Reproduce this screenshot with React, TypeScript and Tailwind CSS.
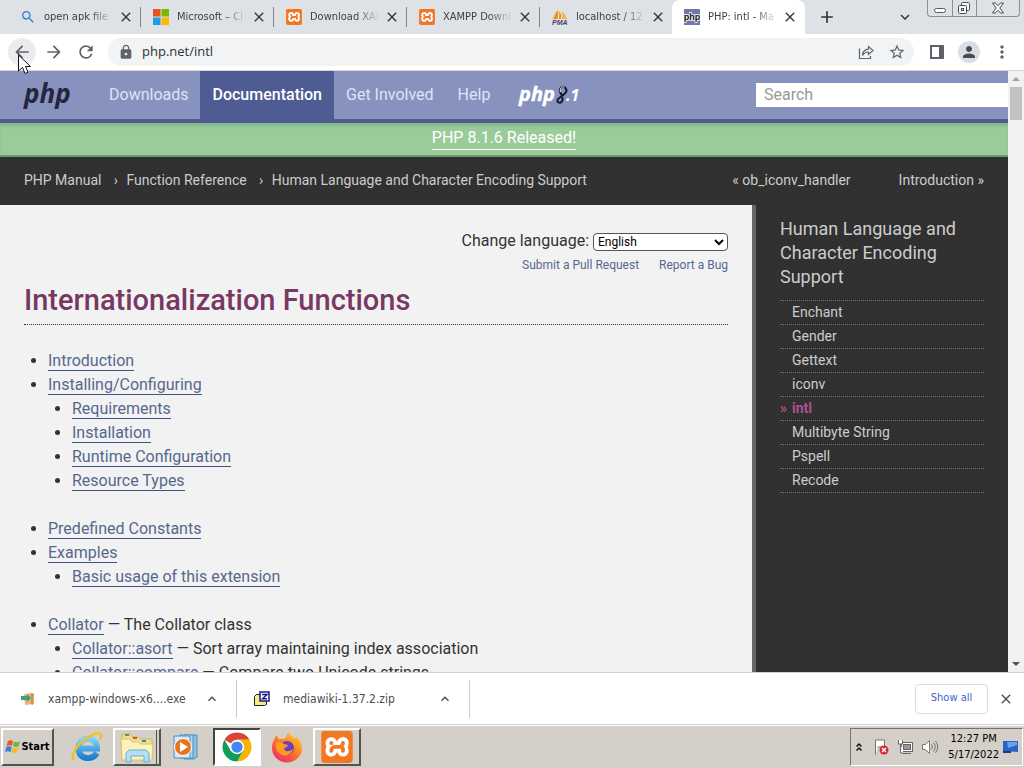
import type { ReactNode } from "react";
import {
  MdArrowBack,
  MdArrowForward,
  MdClose,
  MdExpandLess,
  MdExpandMore,
  MdAdd,
  MdLock,
  MdMoreVert,
  MdPerson,
  MdRefresh,
  MdSearch,
  MdStarBorder,
} from "react-icons/md";
import { SiXampp } from "react-icons/si";

const uiFont = "font-['DejaVu_Sans_Condensed','Noto_Sans',sans-serif]";
const darkTexture =
  "bg-[conic-gradient(#343434_25%,#2d2d2d_0_50%,#343434_0_75%,#2d2d2d_0)] bg-[length:4px_4px]";

function MicrosoftIcon() {
  return (
    <svg viewBox="0 0 16 16" className="size-4">
      <path fill="#e8521f" d="M0 0h7.5v7.5H0z" />
      <path fill="#7db700" d="M8.5 0H16v7.5H8.5z" />
      <path fill="#1a9fe8" d="M0 8.5h7.5V16H0z" />
      <path fill="#fdb800" d="M8.5 8.5H16V16H8.5z" />
    </svg>
  );
}

function XamppIcon({ className }: { className: string }) {
  return (
    <span className={`block rounded-sm bg-white text-[#f37623] ${className}`}>
      <SiXampp className="size-full" />
    </span>
  );
}

function PhpMyAdminIcon() {
  return (
    <svg viewBox="0 0 16 16" className="size-4">
      <path fill="#f29111" d="M5.500 1C3.500 4 2.500 7 1 10h4.500c.8-3 .8-6 0-9z" />
      <path fill="#f9b04a" d="M9.500 2c1 2.500 1 5.500.300 8H15c-.8-3-2.500-6-5.500-8z" />
      <path fill="#f29111" d="M6.500 1.500c1 3 1 5.500.3 8.500h2c.8-3 .4-6-2.300-8.500z" />
      <text x="0" y="16" fontSize="7" fontWeight="700" fontStyle="italic" fill="#454466" fontFamily="Liberation Sans, sans-serif">
        PMA
      </text>
    </svg>
  );
}

function PhpFavicon() {
  return (
    <svg viewBox="0 0 16 16" className="size-4">
      <path fill="#7277ab" d="M0 0h16v16H0z" />
      <text x="8" y="11" fontSize="9" fontWeight="700" textAnchor="middle" fill="#111" stroke="#fff" strokeWidth="1.500" paintOrder="stroke" fontFamily="Liberation Sans, sans-serif">
        php
      </text>
    </svg>
  );
}

const tabs: { title: string; icon: ReactNode; active?: boolean }[] = [
  { title: "open apk file", icon: <MdSearch className="size-4 text-[#2f7fd0]" /> },
  { title: "Microsoft – Cl", icon: <MicrosoftIcon /> },
  { title: "Download XAI", icon: <XamppIcon className="size-4" /> },
  { title: "XAMPP Downl", icon: <XamppIcon className="size-4" /> },
  { title: "localhost / 12", icon: <PhpMyAdminIcon /> },
  { title: "PHP: intl - Ma", icon: <PhpFavicon />, active: true },
];

function TabStrip() {
  return (
    <div className={`relative flex h-[34px] shrink-0 items-center bg-[#dee1e6] pl-2 text-[#3c4043] ${uiFont}`}>
      {tabs.map((tab, i) => (
        <div
          key={tab.title}
          className={`flex h-full w-[133px] items-center pr-[7px] pl-3 ${tab.active ? "-ml-px rounded-t-lg bg-white" : ""}`}
        >
          {tab.icon}
          <span className="ml-2 min-w-0 flex-1 text-[11px] whitespace-nowrap [mask-image:linear-gradient(to_right,#000_65%,transparent_100%)]">
            {tab.title}
          </span>
          <button aria-label={`Close ${tab.title}`} className="ml-1">
            <MdClose className="size-4 text-[#333]" />
          </button>
          {i < 4 && <span className="-mr-[7px] ml-[6px] h-5 w-px bg-[#80868b]" />}
        </div>
      ))}
      <button aria-label="New tab" className="ml-3">
        <MdAdd className="size-5 text-[#333]" />
      </button>
      <button aria-label="Search tabs" className="mr-[110px] ml-auto">
        <MdExpandMore className="size-[18px] text-[#333]" />
      </button>
      <div className="absolute top-0 right-1 flex h-[17px] w-[93px] overflow-hidden rounded-b border border-t-0 border-[#8b8f96] text-[#4a4d52]">
        <button aria-label="Minimize" className="flex flex-1 items-center justify-center border-r border-[#8b8f96]">
          <span className="mt-1 h-[5px] w-3 rounded-sm border border-[#55585d] bg-white" />
        </button>
        <button aria-label="Restore" className="flex flex-1 items-center justify-center border-r border-[#8b8f96]">
          <svg viewBox="0 0 14 14" className="size-[14px]" fill="#f4f5f7" stroke="#4a4d52">
            <rect x="4.500" y="1.500" width="8" height="8" rx="1" />
            <rect x="1.500" y="4.500" width="8" height="8" rx="1" />
            <rect x="4.500" y="7.500" width="2" height="2" />
          </svg>
        </button>
        <button aria-label="Close" className="flex w-[42px] items-center justify-center">
          <svg viewBox="0 0 14 12" className="h-3 w-[14px]" fill="#f4f5f7" stroke="#4a4d52">
            <path d="M1.500 1h3L7 3.700 9.500 1h3L8.800 6l3.700 5h-3L7 8.300 4.500 11h-3l3.700-5z" />
          </svg>
        </button>
      </div>
    </div>
  );
}

function Toolbar() {
  return (
    <div className="relative flex h-[37px] shrink-0 items-center border-b border-[#d5d7db] bg-white pr-3 pl-2 text-[#5f6368]">
      <button aria-label="Back" className="flex size-7 items-center justify-center rounded-full bg-[#ececee]">
        <MdArrowBack className="size-5" />
      </button>
      <button aria-label="Forward" className="ml-1 flex size-7 items-center justify-center">
        <MdArrowForward className="size-5" />
      </button>
      <button aria-label="Reload" className="ml-1 flex size-7 items-center justify-center">
        <MdRefresh className="size-5" />
      </button>
      <div className="ml-2 flex h-7 min-w-0 flex-1 items-center rounded-full bg-[#f1f3f4] pr-2 pl-[10px]">
        <MdLock className="size-4" />
        <input
          aria-label="Address"
          defaultValue="php.net/intl"
          className="ml-2 min-w-0 flex-1 bg-transparent font-['Open_Sans',sans-serif] text-[13px] text-[#303134] outline-none"
        />
        <button aria-label="Share">
          <svg viewBox="0 0 16 16" className="size-4" fill="none" stroke="currentColor" strokeWidth="1.200">
            <path d="M1.500 4.500v10h11V12" />
            <path d="M4.500 11.500c.300-4 2.500-6 6-6.300V2.500l4.500 4-4.500 4V8c-2.500 0-4.500 1-6 3.500z" />
          </svg>
        </button>
        <button aria-label="Bookmark" className="ml-[14px]">
          <MdStarBorder className="size-[18px]" />
        </button>
      </div>
      <button aria-label="Side panel" className="ml-4">
        <svg viewBox="0 0 14 14" className="size-[14px]">
          <path fill="currentColor" fillRule="evenodd" d="M0 0h14v14H0zM2 2v10h7V2z" />
        </svg>
      </button>
      <button aria-label="Profile" className="ml-[14px] flex size-[22px] items-center justify-center rounded-full bg-[#d9dde5]">
        <MdPerson className="size-[18px] text-[#454b57]" />
      </button>
      <button aria-label="Menu" className="ml-3">
        <MdMoreVert className="size-5" />
      </button>
      <svg viewBox="0 0 14 22" className="absolute top-[20px] left-[18px] z-10 h-[22px] w-[14px]">
        <path fill="#fff" stroke="#111" d="M.500 1v16l4-3.500 2.500 6 3-1.300-2.500-5.700H12.500z" />
      </svg>
    </div>
  );
}

const navLinks = ["Downloads", "Documentation", "Get Involved", "Help"];

function SiteHeader() {
  return (
    <header className="flex h-[52px] shrink-0 items-stretch border-b-4 border-[#4f5b93] bg-[#8892bf]">
      <a href="#home" className="mr-[26px] ml-6 flex w-[47px] items-center pb-1 font-['Open_Sans',sans-serif] text-[26px] leading-none font-bold text-[#23263c] italic">
        php
      </a>
      <nav className="flex">
        {navLinks.map((link) => (
          <a
            key={link}
            href="#nav"
            className={`flex items-center px-3 ${
              link === "Documentation" ? "bg-[#4f5b93] font-medium text-white" : "text-[#dfe3f6]"
            }`}
          >
            {link}
          </a>
        ))}
      </nav>
      <a href="#release" aria-label="php8.1" className="ml-4 flex items-center">
        <svg viewBox="0 0 64 26" className="h-[26px] w-16" fontFamily="Open Sans, sans-serif" fontSize="20" fontWeight="700" fontStyle="italic">
          <text x="1" y="19" fill="#fff" stroke="#fff" strokeWidth="0.400">
            php
          </text>
          <path d="M46.500 5c-3-1-6 2-4 6 1 2 3 4 2 7-1 4-6 3-5 0s8-5 9-9c0-1-1-3-2-4z" fill="none" stroke="#151a2c" strokeWidth="2" />
          <path d="M46.500 5c-3-1-5 2-4 5" fill="none" stroke="#fff" strokeWidth="1" />
          <text x="48" y="19" fontSize="16" fill="#fff">
            .1
          </text>
        </svg>
      </a>
      <input
        type="search"
        aria-label="Search"
        placeholder="Search"
        className="my-3 ml-auto h-6 w-1/4 bg-white px-2 placeholder:text-[#999]"
      />
    </header>
  );
}

function Breadcrumbs() {
  return (
    <nav className={`flex h-12 shrink-0 items-center px-6 pb-px text-[14px] text-[#ccc] ${darkTexture}`}>
      <a href="#manual">PHP Manual</a>
      <span className="w-[25px] pl-1 text-center">›</span>
      <a href="#funcref">Function Reference</a>
      <span className="w-[25px] pl-1 text-center">›</span>
      <a href="#international">Human Language and Character Encoding Support</a>
      <a href="#prev" className="ml-auto">
        « ob_iconv_handler
      </a>
      <a href="#next" className="ml-12">
        Introduction »
      </a>
    </nav>
  );
}

type Entry = { name: string; note?: string; children?: Entry[] };

const toc: Entry[] = [
  { name: "Introduction" },
  {
    name: "Installing/Configuring",
    children: [
      { name: "Requirements" },
      { name: "Installation" },
      { name: "Runtime Configuration" },
      { name: "Resource Types" },
    ],
  },
  { name: "Predefined Constants" },
  { name: "Examples", children: [{ name: "Basic usage of this extension" }] },
  {
    name: "Collator",
    note: "The Collator class",
    children: [
      { name: "Collator::asort", note: "Sort array maintaining index association" },
      { name: "Collator::compare", note: "Compare two Unicode strings" },
    ],
  },
];

function EntryList({ entries, nested }: { entries: Entry[]; nested?: boolean }) {
  return (
    <ul className={`list-disc pl-6 ${nested ? "mb-6" : ""}`}>
      {entries.map((entry) => (
        <li key={entry.name} className="leading-6">
          <a href="#entry" className="border-b border-[#3f5580] text-[#56688f]">
            {entry.name}
          </a>
          {entry.note && ` — ${entry.note}`}
          {entry.children && <EntryList entries={entry.children} nested />}
        </li>
      ))}
    </ul>
  );
}

function ManualPage() {
  return (
    <main className="min-w-0 flex-1 border-r-4 border-[#666] bg-[#f2f2f2] px-6 pt-6 text-[#333]">
      <div className="flex items-center justify-end gap-1">
        <label htmlFor="language">Change language:</label>
        <select
          id="language"
          className="mt-px h-[18px] w-[135px] rounded-sm border border-[#555] bg-white text-[12px] leading-none text-black"
        >
          <option>English</option>
        </select>
      </div>
      <div className="flex justify-end gap-5 text-[12px] leading-6 text-[#56688f]">
        <a href="#edit">Submit a Pull Request</a>
        <a href="#bug">Report a Bug</a>
      </div>
      <h1 className="mb-6 border-b border-dotted border-[#333] text-[29px] leading-[47px] font-medium text-[#793862]">
        Internationalization Functions
      </h1>
      <EntryList entries={toc} />
    </main>
  );
}

const siblings = ["Enchant", "Gender", "Gettext", "iconv", "intl", "Multibyte String", "Pspell", "Recode"];

function Sidebar() {
  return (
    <aside className={`w-[252px] shrink-0 px-6 pt-3 text-[#ccc] ${darkTexture}`}>
      <h2 className="mb-[11px] text-[18px] leading-6">Human Language and Character Encoding Support</h2>
      <ul className="border-t border-dotted border-[#777] text-[14px]">
        {siblings.map((name) => (
          <li key={name} className="h-6 border-b border-dotted border-[#777] leading-[23px]">
            {name === "intl" ? (
              <a href="#intl" className="font-bold text-[#ae508d]">
                <span className="inline-block w-3">»</span>
                {name}
              </a>
            ) : (
              <a href="#sibling" className="pl-3">
                {name}
              </a>
            )}
          </li>
        ))}
      </ul>
    </aside>
  );
}

function Scrollbar() {
  return (
    <div className="flex w-4 shrink-0 flex-col items-center bg-[#f1f1f1] py-[6px]">
      <span className="border-x-4 border-b-4 border-x-transparent border-b-[#a3a3a3]" />
      <span className="mt-[6px] h-[33px] w-3 bg-[#c1c1c1]" />
      <span className="mt-auto border-x-4 border-t-4 border-x-transparent border-t-[#505050]" />
    </div>
  );
}

function InstallerIcon() {
  return (
    <svg viewBox="0 0 16 16" className="size-4">
      <path fill="#e6b873" d="M4 3l9-1 1 11-9 1z" />
      <path fill="#c99548" d="M11 2l3 1-1 11-2-1z" />
      <path fill="#3f9e7c" d="M1 5h6V3l4 4-4 4V9H1z" />
    </svg>
  );
}

function ZipIcon() {
  return (
    <svg viewBox="0 0 18 16" className="h-4 w-[18px]">
      <path fill="#f3ef7c" stroke="#222" d="M1.500 5.500l2-2h10v10l-2 1h-10z" />
      <rect x="7" y="1" width="9" height="9" fill="#fff" stroke="#1a1a8c" strokeWidth="1.500" />
      <path fill="none" stroke="#1a1a8c" strokeWidth="1.500" d="M9 3.500h5L9.500 7.800H14" />
    </svg>
  );
}

function DownloadsBar() {
  return (
    <div className={`flex h-[53px] shrink-0 items-center border-y border-[#d0d0d0] bg-white text-[12px] text-[#4a4d51] ${uiFont}`}>
      <div className="flex h-[38px] w-[237px] items-center border-r border-[#ccc] pr-4 pl-5">
        <InstallerIcon />
        <span className="ml-3">xampp-windows-x6....exe</span>
        <button aria-label="Installer options" className="ml-auto">
          <MdExpandLess className="size-4" />
        </button>
      </div>
      <div className="flex h-[38px] w-[233px] items-center border-r border-[#ccc] pr-4 pl-4">
        <ZipIcon />
        <span className="ml-3">mediawiki-1.37.2.zip</span>
        <button aria-label="Archive options" className="ml-auto">
          <MdExpandLess className="size-4" />
        </button>
      </div>
      <button className="ml-auto h-[30px] w-[73px] rounded border border-[#dadce0] text-[11px] text-[#3f5fc8]">Show all</button>
      <button aria-label="Close downloads" className="mr-[10px] ml-[10px]">
        <MdClose className="size-4" />
      </button>
    </div>
  );
}

function WindowsFlag() {
  return (
    <svg viewBox="0 0 16 16" className="size-4">
      <path fill="#e8582c" d="M3 2c2-1 3-1 5 0L7 7C5 6 4 6 1.500 7z" />
      <path fill="#6fb544" d="M9 2.500c2 1 4 1 6 0L13.800 7.300c-2 1-4 1-5.800 0z" />
      <path fill="#3c7fd4" d="M1.300 8c2-1 3.500-1 5.500 0L5.600 13c-2-1-3.600-1-5.600 0z" />
      <path fill="#f6bd27" d="M7.800 8.500c2 1 4 1 5.800 0L12.300 13.300c-2 1-3.800 1-5.800 0z" />
    </svg>
  );
}

function ExplorerEIcon() {
  return (
    <svg viewBox="0 0 32 32" className="size-8">
      <defs>
        <linearGradient id="ie" x1="0" y1="0" x2="0" y2="1">
          <stop offset="0" stopColor="#7fd4f7" />
          <stop offset="1" stopColor="#1d7fd0" />
        </linearGradient>
      </defs>
      <path fill="none" stroke="url(#ie)" strokeWidth="6" d="M8 17.500h18c0-6-3-10-9-10S7.500 12 7.500 17.500 11 27 17 27c4 0 7-2 9-5" />
      <path fill="none" stroke="#eec22e" strokeWidth="2.500" d="M3 29c-4-4 2-14 10-20S29 0 30 4c.5 1.500 0 3-1 5" />
    </svg>
  );
}

function FolderIcon() {
  return (
    <svg viewBox="0 0 34 32" className="h-8 w-[34px]">
      <path fill="#f0df90" stroke="#cdb45f" d="M2 3h8l2 3h7l2 2h11v20H2z" />
      <path fill="#fbf3b8" stroke="#d8c272" d="M1 8h9l2 3h7l2 2h12l-1 16H2z" />
      <path fill="#4c9a45" d="M5 3h4v2H5z" />
      <path fill="#d1542f" d="M13 6h4v2h-4z" />
      <path fill="#3b83c8" d="M22 9h4v2h-4z" />
      <path fill="#b4def2" stroke="#63aedb" d="M6 31v-9l3-3h17l3 3v9h-5v-6H11v6z" />
    </svg>
  );
}

function MediaPlayerIcon() {
  return (
    <svg viewBox="0 0 30 28" className="h-7 w-[30px]">
      <path fill="#8fc1e3" stroke="#4d8fc0" d="M12 2h13v22l-3 2H12z" />
      <path fill="#b7daf0" stroke="#4d8fc0" d="M8 2h13v23H8z" />
      <path fill="#d4e9f6" stroke="#4d8fc0" d="M2 3h16v22H2z" />
      <circle cx="11" cy="14" r="8.500" fill="#e8731d" stroke="#fff" />
      <path fill="#fff" d="M8 9l8 5-8 5z" />
    </svg>
  );
}

function ChromeIcon() {
  return (
    <svg viewBox="0 0 48 48" className="size-[30px]">
      <path fill="#db4437" d="M24 24L4 12.500A23 23 0 0 1 44 12.500H24z" />
      <path fill="#f4b400" d="M24 12.500h20A23 23 0 0 1 24 47l10-17z" />
      <path fill="#0f9d58" d="M4 12.500A23 23 0 0 0 24 47l10-17-10 4-10-4z" />
      <circle cx="24" cy="24" r="11.500" fill="#fff" />
      <circle cx="24" cy="24" r="9" fill="#4285f4" />
    </svg>
  );
}

function FirefoxIcon() {
  return (
    <svg viewBox="0 0 32 32" className="size-8">
      <defs>
        <linearGradient id="fx" x1="1" y1="0" x2="0.300" y2="1">
          <stop offset="0" stopColor="#ffdf3a" />
          <stop offset="0.500" stopColor="#ff8420" />
          <stop offset="1" stopColor="#ee2f64" />
        </linearGradient>
      </defs>
      <path fill="url(#fx)" d="M18 1c1 4 4 4 6 7l1-3c4 4 6 8 6 12a15 14.500 0 0 1-30 0c0-4 1-7 3-10l1-3 3 4h4l3-1c0-2 1-4 3-6z" />
      <circle cx="16" cy="17" r="7" fill="#6d3fc0" />
      <path fill="#ff9a22" d="M5 12c3-2 6-1 8 1l4 1c0 2-3 2-4 4 1 3 6 3 9 0-1 5-6 7-10 6-5-1-8-6-7-12z" />
    </svg>
  );
}

const taskButton = "flex h-[38px] w-12 items-center justify-center";
const raised = "border-2 border-t-white border-l-white border-r-[#55534f] border-b-[#55534f]";

function Taskbar() {
  return (
    <footer className={`flex h-[43px] shrink-0 items-center border-t border-white bg-[#d4cfc9] px-px text-black ${uiFont}`}>
      <button className={`flex h-[38px] w-[53px] items-center justify-center text-[11px] font-bold ${raised}`}>
        <WindowsFlag />
        Start
      </button>
      <div className="ml-[9px] flex items-center gap-[2px]">
        <button aria-label="Internet Explorer" className={taskButton}>
          <ExplorerEIcon />
        </button>
        <button aria-label="File Explorer" className={`${taskButton} ${raised} shadow-[inset_-2px_0_#d4cfc9,inset_-3px_0_#55534f]`}>
          <FolderIcon />
        </button>
        <button aria-label="Media Player" className={taskButton}>
          <MediaPlayerIcon />
        </button>
        <button
          aria-label="Chrome"
          className={`${taskButton} border-2 border-t-[#444] border-r-white border-b-white border-l-[#444] bg-white`}
        >
          <ChromeIcon />
        </button>
        <button aria-label="Firefox" className={taskButton}>
          <FirefoxIcon />
        </button>
        <button aria-label="XAMPP" className={`${taskButton} ${raised}`}>
          <XamppIcon className="size-8" />
        </button>
      </div>
      <div className="ml-auto flex h-[38px] w-[173px] items-center border border-t-[#77746f] border-r-white border-b-white border-l-[#77746f] pl-1">
        <button aria-label="Show hidden icons">
          <svg viewBox="0 0 8 10" className="h-[10px] w-2" fill="none" stroke="#111" strokeWidth="1.500">
            <path d="M1.500 4.500L4 2l2.500 2.500M1.500 8.500L4 6l2.500 2.500" />
          </svg>
        </button>
        <svg viewBox="0 0 16 16" className="ml-[10px] size-4">
          <path fill="#fff" stroke="#777" d="M2.500 15.500V1h9v7h-7" />
          <circle cx="11" cy="11" r="4.500" fill="#dc2633" />
          <path stroke="#fff" strokeWidth="1.500" d="M9 9l4 4M13 9l-4 4" />
        </svg>
        <svg viewBox="0 0 16 16" className="ml-2 size-4" fill="#fff" stroke="#666">
          <rect x="4.500" y="3.500" width="11" height="9" />
          <rect x="6.500" y="5.500" width="7" height="5" fill="#999" />
          <path d="M6 14.500h8M1.500 1v4h4V1M3.500 5v9h3" />
        </svg>
        <svg viewBox="0 0 18 16" className="ml-2 h-4 w-[18px]" fill="#fff" stroke="#777">
          <path d="M1.500 5.500h3l4-4v13l-4-4h-3z" />
          <path fill="none" d="M10.500 5.500q2 2.500 0 5M12.500 3.500q3.500 4.500 0 9M14.500 2q4.500 6 0 12" />
        </svg>
        <div className="ml-auto text-center text-[11px] leading-4">
          <div>12:27 PM</div>
          <div>5/17/2022</div>
        </div>
        <button aria-label="Show desktop" className="mx-1">
          <svg viewBox="0 0 15 12" className="h-3 w-[15px]">
            <path fill="#2b62c4" d="M0 0h15v11L0 10z" />
            <path fill="#6ba2ea" d="M4 1h10v3L5 7z" />
            <path fill="#163a7c" d="M0 10h8v2H0z" />
          </svg>
        </button>
      </div>
    </footer>
  );
}

export default function App() {
  return (
    <div className="flex h-screen flex-col overflow-hidden bg-white">
      <TabStrip />
      <Toolbar />
      <div className="flex min-h-0 flex-1">
        <div className="flex min-w-0 flex-1 flex-col overflow-hidden font-[Roboto,sans-serif] text-[16px]">
          <SiteHeader />
          <div className="flex h-[34px] shrink-0 items-start justify-center border-b-2 border-[#6f9a6f] bg-[#9c9] pt-1 shadow-[inset_0_4px_4px_-2px_#7fae86]">
            <a href="#released" className="border-b border-white leading-[22px] text-white">
              PHP 8.1.6 Released!
            </a>
          </div>
          <Breadcrumbs />
          <div className="flex min-h-0 flex-1">
            <ManualPage />
            <Sidebar />
          </div>
        </div>
        <Scrollbar />
      </div>
      <DownloadsBar />
      <Taskbar />
    </div>
  );
}
